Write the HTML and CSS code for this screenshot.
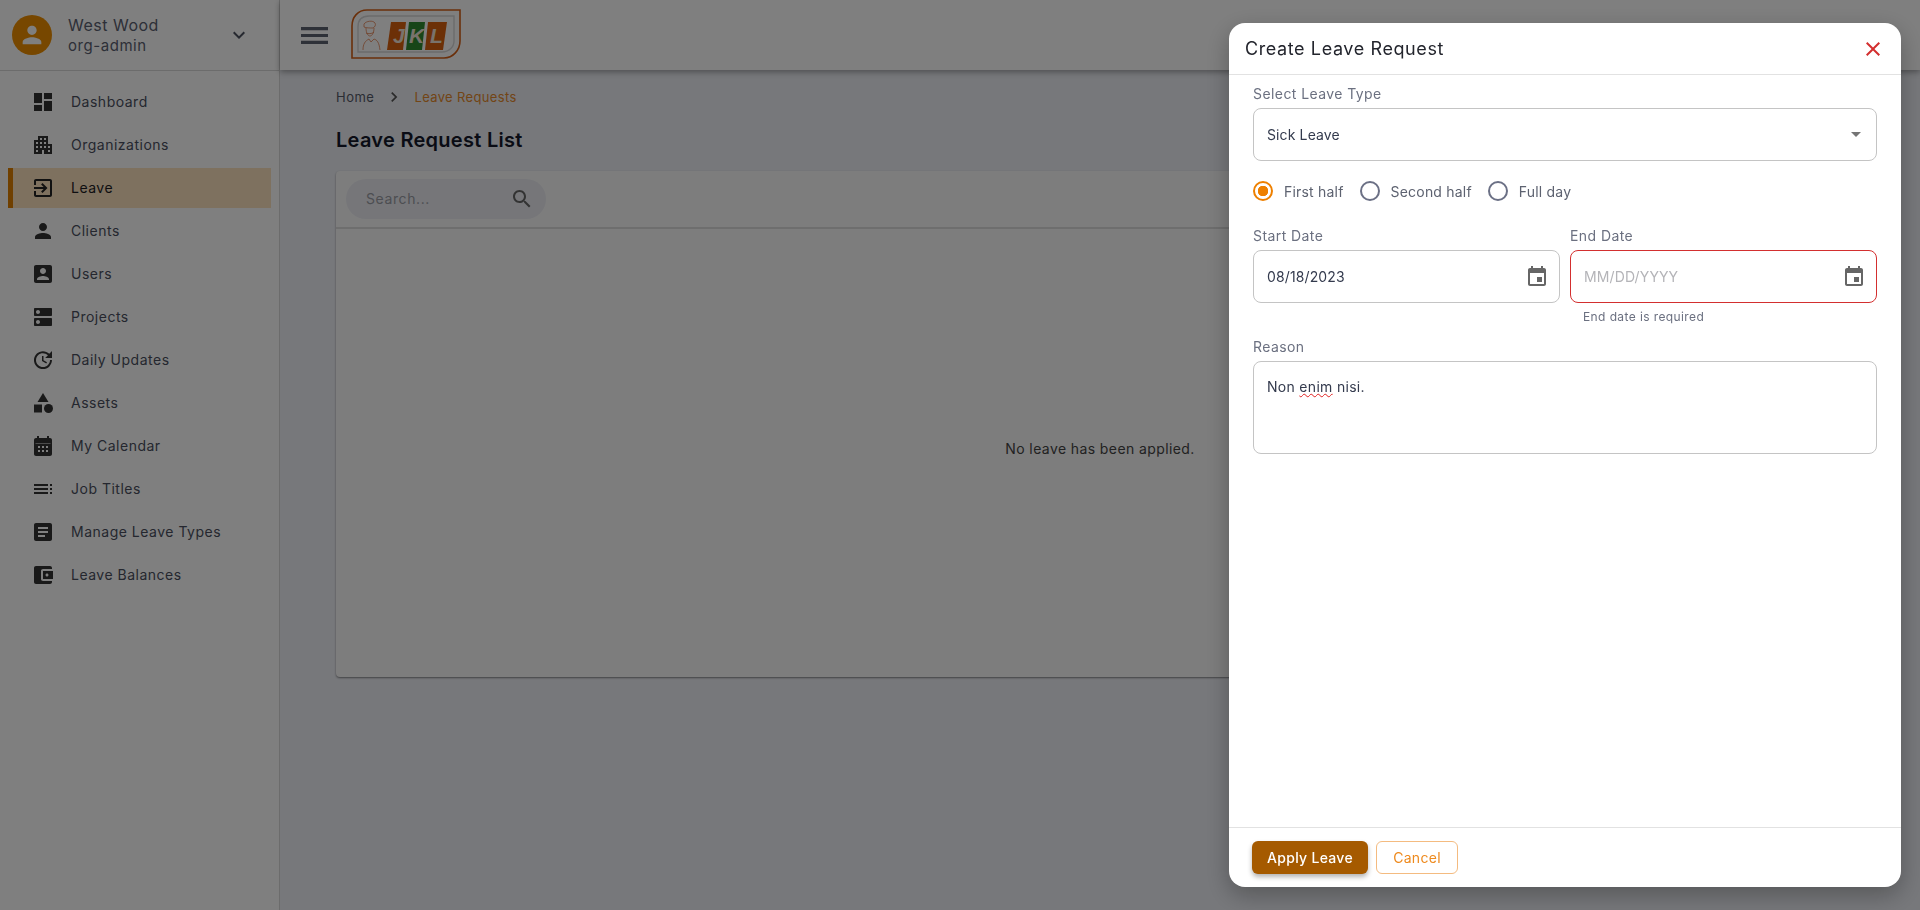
FILE: index.html
```html
<!DOCTYPE html>
<html lang="en">
<head>
  <meta charset="UTF-8">
  <title>Leave Requests</title>
  <link rel="stylesheet" href="styles.css">
</head>
<body>

<div class="app">
  <!-- Sidebar -->
  <aside class="sidebar">
    <div class="profile">
      <div class="avatar">
        <svg viewBox="0 0 24 24" width="28" height="28"><path d="M12 12c2.21 0 4-1.79 4-4s-1.79-4-4-4-4 1.79-4 4 1.79 4 4 4zm0 2c-2.67 0-8 1.34-8 4v2h16v-2c0-2.66-5.33-4-8-4z"/></svg>
      </div>
      <div class="profile-text">
        <div class="profile-name">West Wood</div>
        <div class="profile-role">org-admin</div>
      </div>
      <svg class="profile-arrow" viewBox="0 0 24 24" width="24" height="24"><path d="M7.41 8.59L12 13.17l4.59-4.58L18 10l-6 6-6-6z"/></svg>
    </div>
    <nav class="nav">
      <a class="nav-item"><svg viewBox="0 0 24 24"><path d="M3 13h8V3H3v10zm0 8h8v-6H3v6zm10 0h8V11h-8v10zm0-18v6h8V3h-8z"/></svg><span>Dashboard</span></a>
      <a class="nav-item"><svg viewBox="0 0 24 24"><path d="M17 11V3H7v4H3v14h8v-4h2v4h8V11h-4zM7 19H5v-2h2v2zm0-4H5v-2h2v2zm0-4H5V9h2v2zm4 4H9v-2h2v2zm0-4H9V9h2v2zm0-4H9V5h2v2zm4 8h-2v-2h2v2zm0-4h-2V9h2v2zm0-4h-2V5h2v2zm4 12h-2v-2h2v2zm0-4h-2v-2h2v2z"/></svg><span>Organizations</span></a>
      <a class="nav-item active"><svg viewBox="0 0 24 24"><path d="M10.09 15.59L11.5 17l5-5-5-5-1.41 1.41L12.67 11H3v2h9.67l-2.58 2.59zM19 3H5c-1.11 0-2 .9-2 2v4h2V5h14v14H5v-4H3v4c0 1.1.89 2 2 2h14c1.1 0 2-.9 2-2V5c0-1.1-.9-2-2-2z"/></svg><span>Leave</span></a>
      <a class="nav-item"><svg viewBox="0 0 24 24"><path d="M12 12c2.21 0 4-1.79 4-4s-1.79-4-4-4-4 1.79-4 4 1.79 4 4 4zm0 2c-2.67 0-8 1.34-8 4v2h16v-2c0-2.66-5.33-4-8-4z"/></svg><span>Clients</span></a>
      <a class="nav-item"><svg viewBox="0 0 24 24"><path d="M3 5v14c0 1.1.89 2 2 2h14c1.1 0 2-.9 2-2V5c0-1.1-.9-2-2-2H5c-1.11 0-2 .9-2 2zm12 4c0 1.66-1.34 3-3 3s-3-1.34-3-3 1.34-3 3-3 3 1.34 3 3zm-9 8c0-2 4-3.1 6-3.1s6 1.1 6 3.1v1H6v-1z"/></svg><span>Users</span></a>
      <a class="nav-item"><svg viewBox="0 0 24 24"><path d="M20 13H4c-.55 0-1 .45-1 1v6c0 .55.45 1 1 1h16c.55 0 1-.45 1-1v-6c0-.55-.45-1-1-1zM7 19c-1.1 0-2-.9-2-2s.9-2 2-2 2 .9 2 2-.9 2-2 2zM20 3H4c-.55 0-1 .45-1 1v6c0 .55.45 1 1 1h16c.55 0 1-.45 1-1V4c0-.55-.45-1-1-1zM7 9c-1.1 0-2-.9-2-2s.9-2 2-2 2 .9 2 2-.9 2-2 2z"/></svg><span>Projects</span></a>
      <a class="nav-item"><svg viewBox="0 0 24 24"><path d="M21 10.12h-6.78l2.74-2.82c-2.73-2.7-7.15-2.8-9.88-.1-2.73 2.71-2.73 7.08 0 9.79s7.15 2.71 9.88 0C18.32 15.65 19 14.08 19 12.1h2c0 1.98-.88 4.55-2.64 6.29-3.51 3.48-9.21 3.48-12.72 0-3.5-3.47-3.53-9.11-.02-12.58s9.14-3.47 12.65 0L21 3v7.12zM12.5 8v4.25l3.5 2.08-.72 1.21L11 13V8h1.5z"/></svg><span>Daily Updates</span></a>
      <a class="nav-item"><svg viewBox="0 0 24 24"><path d="M12 2l-5.5 9h11z"/><circle cx="17.5" cy="17.5" r="4.5"/><path d="M3 13.5h8v8H3z"/></svg><span>Assets</span></a>
      <a class="nav-item"><svg viewBox="0 0 24 24"><path fill-rule="evenodd" d="M19 4h-1V2h-2v2H8V2H6v2H5c-1.1 0-2 .9-2 2v14c0 1.1.9 2 2 2h14c1.1 0 2-.9 2-2V6c0-1.1-.9-2-2-2zM4.5 9h15v.6h-15zM9 14H7v-2h2zm4 0h-2v-2h2zm4 0h-2v-2h2zm-8 4H7v-2h2zm4 0h-2v-2h2zm4 0h-2v-2h2z"/></svg><span>My Calendar</span></a>
      <a class="nav-item"><svg viewBox="0 0 24 24"><path d="M3 9h14V7H3v2zm0 4h14v-2H3v2zm0 4h14v-2H3v2zm16 0h2v-2h-2v2zm0-10v2h2V7h-2zm0 6h2v-2h-2v2z"/></svg><span>Job Titles</span></a>
      <a class="nav-item"><svg viewBox="0 0 24 24"><path d="M19 3H5c-1.1 0-2 .9-2 2v14c0 1.1.9 2 2 2h14c1.1 0 2-.9 2-2V5c0-1.1-.9-2-2-2zm-5 14H7v-2h7v2zm3-4H7v-2h10v2zm0-4H7V7h10v2z"/></svg><span>Manage Leave Types</span></a>
      <a class="nav-item"><svg viewBox="0 0 24 24"><path d="M21 18v1c0 1.1-.9 2-2 2H5c-1.11 0-2-.9-2-2V5c0-1.1.89-2 2-2h14c1.1 0 2 .9 2 2v1h-9c-1.11 0-2 .9-2 2v8c0 1.1.89 2 2 2h9zm-9-2h10V8H12v8zm4-2.5c-.83 0-1.5-.67-1.5-1.5s.67-1.5 1.5-1.5 1.5.67 1.5 1.5-.67 1.5-1.5 1.5z"/></svg><span>Leave Balances</span></a>
    </nav>
  </aside>

  <div class="content">
    <!-- Top bar -->
    <header class="topbar">
      <svg class="menu-icon" viewBox="0 0 27 17" width="27" height="17"><path d="M0 0h27v3.2H0zM0 6.9h27v3.2H0zM0 13.8h27V17H0z"/></svg>
      <svg class="logo" viewBox="0 0 110 50" width="110" height="50">
        <path class="logo-outer" d="M1 49V17C1 8 7 1 16 1h93v31c0 9-7 17-16 17z"/>
        <path class="logo-inner" d="M7 43V18C7 11 11 7 18 7h85v25c0 6-5 11-12 11z"/>
        <g class="logo-man">
          <path d="M13 15c2-3 9-4 11-1 1 2 0 4-2 5-3 0-7 0-9-1z"/>
          <path d="M15 19c0 5 2 8 4 8s4-3 4-8M15 24c2 1 6 1 8-1"/>
          <path d="M12 41c0-6 2-9 6-11l2 3 3-3c3 1 5 3 6 11"/>
        </g>
        <path class="logo-orange" d="M40 13h15l-3 28H36z"/>
        <path class="logo-green" d="M58 13h16l-3 28H55z"/>
        <path class="logo-orange" d="M77 13h19l-4 28H74z"/>
        <text class="logo-letter" x="42" y="34">J</text>
        <text class="logo-letter" x="58" y="34">K</text>
        <text class="logo-letter" x="79" y="34">L</text>
      </svg>
    </header>

    <!-- Main -->
    <main class="main">
      <div class="breadcrumb">
        <span>Home</span>
        <svg viewBox="0 0 24 24" width="20" height="20"><path d="M10 6L8.59 7.41 13.17 12l-4.58 4.59L10 18l6-6z"/></svg>
        <span class="breadcrumb-current">Leave Requests</span>
      </div>
      <h1 class="page-title">Leave Request List</h1>
      <div class="card">
        <div class="card-head">
          <div class="search">
            <span>Search...</span>
            <svg viewBox="0 0 24 24" width="24" height="24"><path d="M15.5 14h-.79l-.28-.27C15.41 12.59 16 11.11 16 9.5 16 5.91 13.09 3 9.5 3S3 5.91 3 9.5 5.91 16 9.5 16c1.61 0 3.09-.59 4.23-1.57l.27.28v.79l5 4.99L20.49 19l-4.99-5zm-6 0C7.01 14 5 11.99 5 9.5S7.01 5 9.5 5 14 7.01 14 9.5 11.99 14 9.5 14z"/></svg>
          </div>
        </div>
        <div class="card-empty">No leave has been applied.</div>
      </div>
    </main>
  </div>
</div>

<!-- Drawer -->
<div class="backdrop"></div>
<div class="modal">
  <div class="modal-head">
    <h2>Create Leave Request</h2>
    <svg class="modal-close" viewBox="0 0 24 24" width="24" height="24"><path d="M19 6.41L17.59 5 12 10.59 6.41 5 5 6.41 10.59 12 5 17.59 6.41 19 12 13.41 17.59 19 19 17.59 13.41 12z"/></svg>
  </div>

  <div class="modal-body">
    <label class="field-label">Select Leave Type</label>
    <div class="field">
      <span>Sick Leave</span>
      <svg class="select-arrow" viewBox="0 0 10 5" width="10" height="5"><path d="M0 0l5 5 5-5z"/></svg>
    </div>

    <div class="radios">
      <div class="radio checked"><i></i><span>First half</span></div>
      <div class="radio"><i></i><span>Second half</span></div>
      <div class="radio"><i></i><span>Full day</span></div>
    </div>

    <div class="date-row">
      <div>
        <label class="field-label">Start Date</label>
        <div class="field">
          <span>08/18/2023</span>
          <svg class="cal" viewBox="0 0 24 24" width="24" height="24"><path d="M17 12h-5v5h5v-5zM16 1v2H8V1H6v2H5c-1.11 0-1.99.9-1.99 2L3 19c0 1.1.89 2 2 2h14c1.1 0 2-.9 2-2V5c0-1.1-.9-2-2-2h-1V1h-2zm3 18H5V8h14v11z"/></svg>
        </div>
      </div>
      <div>
        <label class="field-label">End Date</label>
        <div class="field error">
          <span class="placeholder">MM/DD/YYYY</span>
          <svg class="cal" viewBox="0 0 24 24" width="24" height="24"><path d="M17 12h-5v5h5v-5zM16 1v2H8V1H6v2H5c-1.11 0-1.99.9-1.99 2L3 19c0 1.1.89 2 2 2h14c1.1 0 2-.9 2-2V5c0-1.1-.9-2-2-2h-1V1h-2zm3 18H5V8h14v11z"/></svg>
        </div>
        <div class="help">End date is required</div>
      </div>
    </div>

    <label class="field-label reason-label">Reason</label>
    <div class="textarea">Non <span class="typo">enim</span> nisi.</div>
  </div>

  <div class="modal-foot">
    <button class="btn btn-primary">Apply Leave</button>
    <button class="btn btn-outline">Cancel</button>
  </div>
</div>

</body>
</html>
```

FILE: styles.css
```css
* {
  box-sizing: border-box;
}
html, body {
  height: 100%;
}
body {
  margin: 0;
  font-family: Inter, "Open Sans", sans-serif;
  font-size: 14px;
  color: #333a4d;
  background: #eef0f6;
  overflow: hidden;
}
.app {
  display: flex;
  height: 910px;
}

/* sidebar */
.sidebar {
  width: 280px;
  flex-shrink: 0;
  background: #fff;
  border-right: 1px solid #d8d8d8;
}
.profile {
  display: flex;
  align-items: center;
  height: 71px;
  padding: 0 28px 0 12px;
  border-bottom: 1px solid #d8d8d8;
}
.avatar {
  width: 40px;
  height: 40px;
  border-radius: 50%;
  background: #ee8f00;
  display: flex;
  align-items: center;
  justify-content: center;
  fill: #fff;
}
.profile-text {
  flex: 1;
  margin-left: 16px;
  color: #5b6070;
}
.profile-name {
  font-size: 16px;
  line-height: 22px;
  letter-spacing: 0.5px;
}
.profile-role {
  font-size: 15px;
  line-height: 20px;
  letter-spacing: 0.55px;
}
.profile-arrow {
  fill: #4d5260;
}
.nav {
  padding-top: 11px;
}
.nav-item {
  display: flex;
  align-items: center;
  gap: 16px;
  height: 40px;
  margin: 0 8px 3px;
  padding-left: 23px;
  color: #4a4f5e;
  letter-spacing: 0.5px;
}
.nav-item span {
  padding-bottom: 1px;
}
.nav-item svg {
  width: 24px;
  height: 24px;
  fill: #333;
}
.nav-item.active {
  background: #fce2bf;
  border-left: 5px solid #e08000;
  padding-left: 18px;
  color: #1c1c24;
}
.nav-item.active svg {
  fill: #222;
}

/* top bar */
.content {
  flex: 1;
  min-width: 0;
}
.topbar {
  display: flex;
  align-items: center;
  height: 70px;
  padding-left: 21px;
  background: #fff;
  box-shadow: 0 2px 6px rgba(0, 0, 0, 0.35);
}
.menu-icon {
  fill: #5c6270;
}
.logo {
  margin-left: 23px;
  margin-top: -2px;
}
.logo-outer {
  fill: none;
  stroke: #d45f15;
  stroke-width: 1.6;
}
.logo-inner {
  fill: none;
  stroke: #d6d6d6;
  stroke-width: 1.4;
}
.logo-man path {
  fill: none;
  stroke: #e0703a;
  stroke-width: 0.7;
}
.logo-orange {
  fill: #d8600f;
}
.logo-green {
  fill: #2e8a30;
}
.logo-letter {
  font-family: "Liberation Sans", sans-serif;
  font-size: 21px;
  font-weight: bold;
  font-style: italic;
  fill: #f2e6d8;
}

/* main */
.main {
  padding: 17px 56px 0;
}
.breadcrumb {
  display: flex;
  align-items: center;
  gap: 10px;
  height: 20px;
  font-size: 13px;
  letter-spacing: 0.5px;
  color: #555a68;
}
.breadcrumb svg {
  fill: #555;
}
.breadcrumb-current {
  color: #e58a2c;
  letter-spacing: 0.35px;
}
.page-title {
  margin: 20px 0 0;
  font-size: 20px;
  line-height: 26px;
  font-weight: 600;
  letter-spacing: 0.28px;
  color: #14182a;
}
.card {
  margin-top: 18px;
  height: 506px;
  background: #fbfbfb;
  border-radius: 4px;
  box-shadow: 0 1px 2px rgba(0, 0, 0, 0.45);
}
.card-head {
  height: 58px;
  padding: 8px 10px;
  border-bottom: 2px solid #dcdcdc;
}
.search {
  display: flex;
  align-items: center;
  justify-content: space-between;
  width: 200px;
  height: 40px;
  padding: 0 12px 0 20px;
  border-radius: 20px;
  background: #ecedf3;
  color: #9a9ca4;
  letter-spacing: 0.6px;
}
.search span {
  padding-bottom: 2px;
}
.search svg {
  fill: #666;
}
.card-empty {
  display: flex;
  align-items: center;
  justify-content: center;
  height: 448px;
  padding-bottom: 10px;
  font-size: 14px;
  letter-spacing: 0.4px;
  color: #444;
}

/* overlay + drawer */
.backdrop {
  position: fixed;
  inset: 0;
  background: rgba(0, 0, 0, 0.5);
}
.modal {
  position: fixed;
  top: 23px;
  left: 1229px;
  width: 672px;
  height: 864px;
  display: flex;
  flex-direction: column;
  background: #fff;
  border-radius: 16px;
  box-shadow: 0 8px 24px rgba(0, 0, 0, 0.28);
}
.modal-head {
  display: flex;
  align-items: center;
  justify-content: space-between;
  height: 52px;
  padding: 0 16px 0 16px;
  border-bottom: 1px solid #e2e2e2;
}
.modal-head h2 {
  margin: 0;
  font-size: 18px;
  font-weight: 400;
  letter-spacing: 0.6px;
  color: #23252d;
}
.modal-close {
  fill: #d32f2f;
}
.modal-body {
  flex: 1;
  padding: 7px 24px 0;
}
.field-label {
  display: block;
  margin-bottom: 3px;
  padding-top: 1px;
  line-height: 22px;
  letter-spacing: 0.42px;
  color: #6b7080;
}
.field {
  display: flex;
  align-items: center;
  justify-content: space-between;
  height: 53px;
  padding: 0 13px;
  border: 1px solid #c4c4c4;
  border-radius: 8px;
  letter-spacing: 0.12px;
}
.field.error {
  border-color: #d32f2f;
}
.placeholder {
  color: #b4b4b8;
}
.select-arrow {
  fill: #757575;
  margin-right: 2px;
}
.cal {
  fill: #666;
  margin-right: -3px;
}
.radios {
  display: flex;
  align-items: center;
  gap: 16px;
  height: 30px;
  margin: 15px 0 18px;
}
.radio {
  display: flex;
  align-items: center;
  gap: 11px;
  color: #5d6270;
  letter-spacing: 0.2px;
}
.radio i {
  width: 20px;
  height: 20px;
  border: 2px solid #6b7085;
  border-radius: 50%;
}
.radio.checked i {
  border-color: #ee8000;
  background: radial-gradient(circle, #ee8000 0, #ee8000 5px, transparent 5.5px);
}
.date-row {
  display: grid;
  grid-template-columns: 1fr 1fr;
  gap: 10px;
}
.help {
  margin: 5px 0 0 13px;
  font-size: 12px;
  line-height: 18px;
  letter-spacing: 0.4px;
  color: #6b7080;
}
.reason-label {
  margin-top: 9px;
}
.textarea {
  height: 93px;
  padding: 16px 13px 0;
  border: 1px solid #c4c4c4;
  border-radius: 8px;
  letter-spacing: 0.3px;
}
.typo {
  text-decoration: underline wavy #e02020 1px;
}
.modal-foot {
  display: flex;
  gap: 8px;
  align-items: center;
  height: 60px;
  padding: 0 23px;
  border-top: 1px solid #e2e2e2;
}
.btn {
  height: 33px;
  border-radius: 6px;
  font-family: inherit;
  font-size: 14px;
  letter-spacing: 0.3px;
  cursor: pointer;
}
.btn-primary {
  width: 116px;
  background: #a55a00;
  color: #fff;
  border: none;
  font-weight: 500;
  box-shadow: 0 3px 5px rgba(0, 0, 0, 0.3);
}
.btn-outline {
  width: 82px;
  background: #fff;
  color: #ee8a1e;
  border: 1px solid #f4bb80;
}
```
